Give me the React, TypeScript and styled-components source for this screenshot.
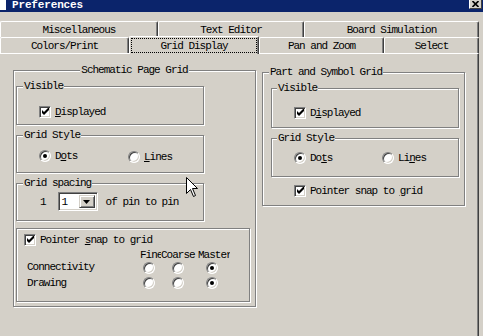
import React from "react";
import styled, { createGlobalStyle } from "styled-components";

const FACE = "#d4d0c8";
const SHADOW = "#808080";
const DARK = "#404040";

const GlobalStyle = createGlobalStyle`
  html, body { margin: 0; padding: 0; background: ${FACE}; }
  body {
    font-family: "Liberation Mono", "Courier New", monospace;
    font-size: 11px;
    letter-spacing: -1px;
    line-height: 12px;
    color: #000;
  }
  #root { width: 483px; height: 336px; }
  u { text-underline-offset: 1px; }
`;

const Window = styled.div`
  position: relative;
  width: 483px;
  height: 336px;
  overflow: hidden;
  background: ${FACE};
  display: flex;
  flex-direction: column;
`;

const TitleBar = styled.div`
  flex: none;
  height: 12px;
  background: #0b246b;
  display: flex;
  align-items: flex-start;
  overflow: hidden;
`;

const AppIcon = styled.div`
  flex: none;
  width: 6px;
  height: 10px;
  background: #fff;
`;

const TitleText = styled.div`
  margin: 0 0 0 6px;
  color: #fff;
  font-weight: bold;
  letter-spacing: -0.15px;
  line-height: 11px;
  white-space: nowrap;
`;

const CloseButton = styled.div`
  flex: none;
  margin-left: auto;
  margin-right: 1px;
  width: 13px;
  height: 9px;
  box-sizing: border-box;
  background: ${FACE};
  border-right: 1px solid ${DARK};
  border-bottom: 1px solid ${DARK};
  border-left: 1px solid #fff;
  display: flex;
  align-items: center;
  justify-content: center;
`;

const TabStrip = styled.div`
  flex: none;
  margin-top: 9px;
  display: flex;
  flex-direction: column;
`;

const TabRow = styled.div`
  display: flex;
  height: 16px;
`;

const Tab = styled.div<{ $w: number; $active?: boolean }>`
  flex: none;
  box-sizing: border-box;
  width: ${(p) => p.$w}px;
  height: ${(p) => (p.$active ? 18 : 16)}px;
  margin-top: ${(p) => (p.$active ? -1 : 0)}px;
  padding-top: ${(p) => (p.$active ? 0 : 1)}px;
  position: relative;
  z-index: ${(p) => (p.$active ? 1 : 0)};
  background: ${FACE};
  border-top: 1px solid #fff;
  border-left: 1px solid #fff;
  border-right: 1px solid ${DARK};
  border-radius: 2px 2px 0 0;
  box-shadow: inset -1px 0 ${SHADOW};
  display: flex;
  align-items: ${(p) => (p.$active ? "flex-start" : "center")};
  justify-content: center;
  white-space: nowrap;
`;

const FocusRing = styled.div`
  box-sizing: border-box;
  margin-top: 1px;
  width: calc(100% - 2px);
  height: 15px;
  border: 1px dotted #000;
  display: flex;
  align-items: center;
  justify-content: center;
`;

const Panel = styled.div`
  flex: 1;
  box-sizing: border-box;
  width: 479px;
  border-top: 1px solid #fff;
  border-right: 1px solid ${DARK};
  box-shadow: inset -1px 0 ${SHADOW};
  display: flex;
  align-items: flex-start;
  gap: 6px;
  padding: 16px 0 0 13px;
`;

const Frame = styled.div<{ $w: number; $h: number; $mt?: number; $ml?: number }>`
  flex: none;
  box-sizing: border-box;
  width: ${(p) => p.$w}px;
  height: ${(p) => p.$h}px;
  margin-top: ${(p) => p.$mt ?? 0}px;
  margin-left: ${(p) => p.$ml ?? 0}px;
  border: 1px solid ${SHADOW};
  box-shadow: inset 1px 1px #fff, 1px 1px #fff;
  display: flex;
  flex-direction: column;
  align-items: flex-start;
`;

const Caption = styled.div<{ $ml?: number; $center?: boolean }>`
  margin: -7px 0 0 ${(p) => p.$ml ?? 0}px;
  align-self: ${(p) => (p.$center ? "center" : "flex-start")};
  padding: 0 1px;
  background: ${FACE};
  line-height: 12px;
  white-space: nowrap;
`;

const Row = styled.div<{ $mt?: number; $ml?: number }>`
  display: flex;
  align-items: center;
  min-height: 13px;
  margin-top: ${(p) => p.$mt ?? 0}px;
  margin-left: ${(p) => p.$ml ?? 0}px;
  white-space: nowrap;
`;

const Item = styled.div<{ $w?: number; $dy?: number }>`
  display: flex;
  align-items: center;
  gap: 4px;
  width: ${(p) => (p.$w ? `${p.$w}px` : "auto")};
  margin-top: ${(p) => p.$dy ?? 0}px;
  white-space: nowrap;
`;

const Box = styled.div`
  flex: none;
  box-sizing: border-box;
  width: 12px;
  height: 12px;
  background: #fff;
  border: 1px solid;
  border-color: ${SHADOW} #fff #fff ${SHADOW};
  box-shadow: inset 1px 1px ${DARK}, inset -1px -1px ${FACE};
  display: flex;
  align-items: center;
  justify-content: center;
`;

const Radio = styled.div<{ $on?: boolean; $ml?: number }>`
  flex: none;
  box-sizing: border-box;
  width: 12px;
  height: 12px;
  margin-left: ${(p) => p.$ml ?? 0}px;
  border-radius: 50%;
  background: #fff;
  border: 1px solid;
  border-color: ${SHADOW} #fff #fff ${SHADOW};
  box-shadow: inset 1px 1px ${DARK}, inset -1px -1px ${FACE};
  display: flex;
  align-items: center;
  justify-content: center;
  &::after {
    content: "";
    width: 4px;
    height: 4px;
    border-radius: 50%;
    background: ${(p) => (p.$on ? "#000" : "transparent")};
  }
`;

const Combo = styled.div`
  flex: none;
  box-sizing: border-box;
  width: 40px;
  height: 19px;
  margin-left: 12px;
  background: #fff;
  border: 1px solid;
  border-color: ${SHADOW} #fff #fff ${SHADOW};
  box-shadow: inset 1px 1px ${DARK}, inset -1px -1px ${FACE};
  padding: 2px;
  display: flex;
  align-items: stretch;
`;

const ComboValue = styled.span`
  flex: 1;
  padding-left: 1px;
  line-height: 15px;
`;

const ComboButton = styled.div`
  flex: none;
  box-sizing: border-box;
  width: 16px;
  background: ${FACE};
  border: 1px solid;
  border-color: ${FACE} ${DARK} ${DARK} ${FACE};
  box-shadow: inset 1px 1px #fff, inset -1px -1px ${SHADOW};
  display: flex;
  align-items: center;
  justify-content: center;
`;

const Text = styled.span<{ $ml?: number }>`
  margin-left: ${(p) => p.$ml ?? 0}px;
`;

const Matrix = styled.div`
  margin: 3px 0 0 10px;
  display: grid;
  grid-template-columns: 113px 21px 37px 32px;
  grid-template-rows: 12px 14px 14px;
  align-items: center;
  & > :nth-child(n + 9) {
    margin-top: 2px;
  }
`;

const HeadCell = styled.div`
  overflow: hidden;
  white-space: nowrap;
  margin-top: -1px;
`;

const RowLabel = styled.div<{ $dy?: number }>`
  white-space: nowrap;
  margin-top: ${(p) => p.$dy ?? 0}px;
`;

const Cursor = styled.svg`
  position: absolute;
  left: 186px;
  top: 177px;
`;

const Check = () => (
  <svg width="7" height="7" viewBox="0 0 7 7">
    <polygon points="0,2 2,4 6,0 7,0 7,2 2,7 0,5" fill="#000" />
  </svg>
);

const CheckBox = () => (
  <Box>
    <Check />
  </Box>
);

const Arrow = () => (
  <svg width="7" height="4" viewBox="0 0 7 4">
    <polygon points="0,0 7,0 3.5,4" fill="#000" />
  </svg>
);

const radioOffsets = [3, 11, 8];

export default function App() {
  return (
    <>
      <GlobalStyle />
      <Window>
        <TitleBar>
          <AppIcon />
          <TitleText>Preferences</TitleText>
          <CloseButton>
            <svg width="7" height="6" viewBox="0 0 7 6">
              <path d="M0.5 0 L6.5 6 M6.5 0 L0.5 6" stroke="#000" strokeWidth="1.6" />
            </svg>
          </CloseButton>
        </TitleBar>

        <TabStrip>
          <TabRow>
            <Tab $w={158}>Miscellaneous</Tab>
            <Tab $w={146}>Text Editor</Tab>
            <Tab $w={175}>Board Simulation</Tab>
          </TabRow>
          <TabRow>
            <Tab $w={129}>Colors/Print</Tab>
            <Tab $w={130} $active>
              <FocusRing>Grid Display</FocusRing>
            </Tab>
            <Tab $w={125}>Pan and Zoom</Tab>
            <Tab $w={95}>Select</Tab>
          </TabRow>
        </TabStrip>

        <Panel>
          <Frame $w={243} $h={237}>
            <Caption $center>Schematic Page Grid</Caption>

            <Frame $w={188} $h={39} $mt={10} $ml={2}>
              <Caption $ml={6}>Visible</Caption>
              <Row $mt={13} $ml={22}>
                <Item>
                  <CheckBox />
                  <span>
                    <u>D</u>isplayed
                  </span>
                </Item>
              </Row>
            </Frame>

            <Frame $w={188} $h={38} $mt={10} $ml={2}>
              <Caption $ml={6}>Grid Style</Caption>
              <Row $mt={7} $ml={22}>
                <Item $w={89}>
                  <Radio $on />
                  <span>
                    D<u>o</u>ts
                  </span>
                </Item>
                <Item $dy={3}>
                  <Radio />
                  <span>
                    <u>L</u>ines
                  </span>
                </Item>
              </Row>
            </Frame>

            <Frame $w={188} $h={38} $mt={10} $ml={2}>
              <Caption $ml={6}>Grid spacing</Caption>
              <Row $mt={3} $ml={23}>
                <Text>1</Text>
                <Combo>
                  <ComboValue>1</ComboValue>
                  <ComboButton>
                    <Arrow />
                  </ComboButton>
                </Combo>
                <Text $ml={8}>of pin to pin</Text>
              </Row>
            </Frame>

            <Frame $w={234} $h={74} $mt={7} $ml={2}>
              <Row $mt={4} $ml={7}>
                <Item>
                  <CheckBox />
                  <span>
                    Pointer <u>s</u>nap to grid
                  </span>
                </Item>
              </Row>
              <Matrix>
                <span />
                <HeadCell>Fine</HeadCell>
                <HeadCell>Coarse</HeadCell>
                <HeadCell>Master</HeadCell>
                <RowLabel $dy={-3}>Connectivity</RowLabel>
                {radioOffsets.map((ml, i) => (
                  <Radio key={`c${i}`} $ml={ml} $on={i === 2} />
                ))}
                <RowLabel>Drawing</RowLabel>
                {radioOffsets.map((ml, i) => (
                  <Radio key={`d${i}`} $ml={ml} $on={i === 2} />
                ))}
              </Matrix>
            </Frame>
          </Frame>

          <Frame $w={203} $h={134} $mt={2}>
            <Caption $ml={6}>Part and Symbol Grid</Caption>

            <Frame $w={188} $h={40} $mt={10} $ml={8}>
              <Caption $ml={5}>Visible</Caption>
              <Row $mt={12} $ml={22}>
                <Item>
                  <CheckBox />
                  <span>
                    D<u>i</u>splayed
                  </span>
                </Item>
              </Row>
            </Frame>

            <Frame $w={188} $h={39} $mt={10} $ml={8}>
              <Caption $ml={5}>Grid Style</Caption>
              <Row $mt={7} $ml={22}>
                <Item $w={88}>
                  <Radio $on />
                  <span>
                    Do<u>t</u>s
                  </span>
                </Item>
                <Item>
                  <Radio />
                  <span>
                    Li<u>n</u>es
                  </span>
                </Item>
              </Row>
            </Frame>

            <Row $mt={7} $ml={31}>
              <Item>
                <CheckBox />
                <span>
                  Pointer snap to <u>g</u>rid
                </span>
              </Item>
            </Row>
          </Frame>
        </Panel>

        <Cursor width="13" height="21" viewBox="0 0 13 21">
          <path
            d="M0.5 0.5 L0.5 16.5 L4.5 12.5 L7.5 19.5 L9.5 18.5 L6.5 11.5 L11.5 11.5 Z"
            fill="#fff"
            stroke="#000"
            strokeWidth="1"
          />
        </Cursor>
      </Window>
    </>
  );
}
